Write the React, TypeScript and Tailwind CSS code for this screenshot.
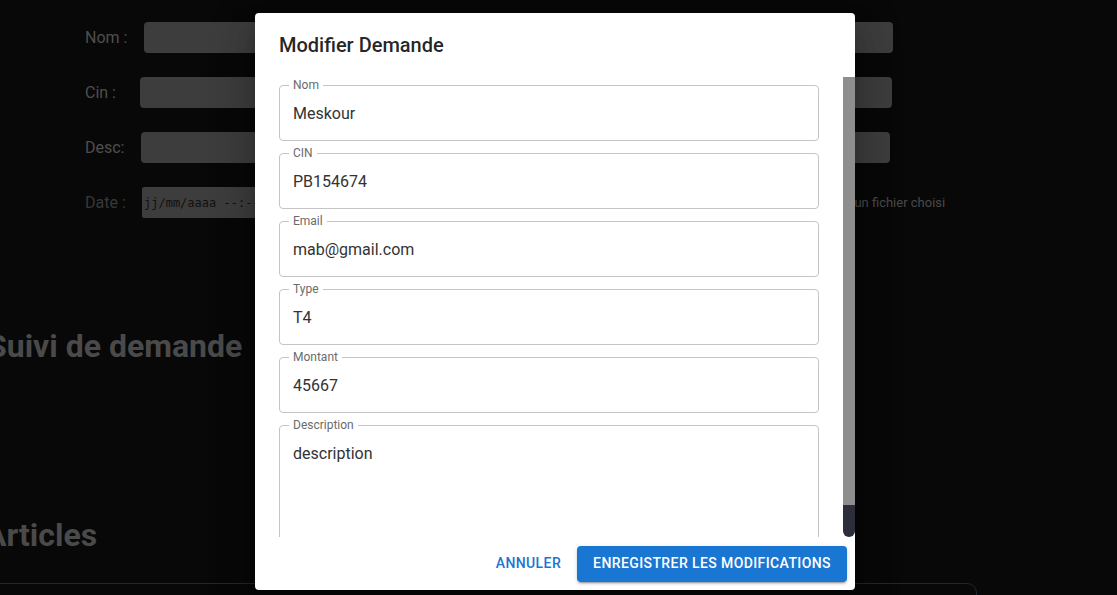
import React from "react";

function Field({ label, value, tall }: { label: string; value: string; tall?: boolean }) {
  return (
    <div
      className={
        tall
          ? "relative shrink-0 h-[160px] border border-[#c4c4c4] rounded-[4px] flex items-start pt-[16px] px-[13px] text-[16px] leading-[23px] text-[#333333]"
          : "relative shrink-0 h-[56px] border border-[#c4c4c4] rounded-[4px] flex items-center px-[13px] text-[16px] leading-[23px] text-[#333333]"
      }
    >
      <span className="absolute left-[9px] -top-[9px] px-[4px] bg-white text-[12px] leading-[16px] text-[#6b6b6b]">
        {label}
      </span>
      <span>{value}</span>
    </div>
  );
}

export default function App() {
  return (
    <div className="relative w-[1117px] h-[595px] overflow-hidden bg-[#080808] font-['Roboto','Liberation_Sans',sans-serif]">
      {/* background page */}
      <div className="flex flex-col pt-[22px]">
        <div className="flex flex-col gap-[24px] pl-[85px]">
          <div className="flex items-center h-[31px]">
            <span className="w-[59px] text-[16px] text-[#4f4f4f]">Nom :</span>
            <div className="h-[31px] w-[749px] rounded-[4px] bg-[#3d3d3d]" />
          </div>
          <div className="flex items-center h-[31px]">
            <span className="w-[55px] text-[16px] text-[#4f4f4f]">Cin :</span>
            <div className="h-[31px] w-[752px] rounded-[4px] bg-[#3d3d3d]" />
          </div>
          <div className="flex items-center h-[31px]">
            <span className="w-[56px] text-[16px] text-[#4f4f4f]">Desc:</span>
            <div className="h-[31px] w-[749px] rounded-[4px] bg-[#3d3d3d]" />
          </div>
          <div className="flex items-center h-[31px]">
            <span className="w-[57px] text-[16px] text-[#383838]">Date :</span>
            <div className="h-[31px] w-[200px] rounded-[2px] bg-[#3d3d3d] flex items-center pl-[2px] font-['DejaVu_Sans_Mono',monospace] text-[12px] text-[#111111]">
              jj/mm/aaaa --:--
            </div>
            <span className="ml-[490px] text-[13px] text-[#4a4a4a]">Aucun fichier choisi</span>
          </div>
        </div>
        <h2 className="mt-[110px] ml-[-13px] text-[32px] leading-[37px] font-bold text-[#4a4a4a] whitespace-nowrap">
          Suivi de demande
        </h2>
        <h2 className="mt-[152px] ml-[-15px] text-[32px] leading-[37px] font-bold text-[#4a4a4a] whitespace-nowrap">
          Articles
        </h2>
        <div className="mt-[29px] ml-[-13px] w-[990px] h-[40px] border border-[#1c2833] rounded-[10px]" />
      </div>

      {/* dialog */}
      <div className="absolute left-[255px] top-[13px] w-[600px] h-[577px] bg-white rounded-[4px] shadow-[0_11px_15px_-7px_rgba(0,0,0,0.2),0_24px_38px_3px_rgba(0,0,0,0.14),0_9px_46px_8px_rgba(0,0,0,0.12)] flex flex-col overflow-hidden">
        <div className="px-[24px] py-[16px] text-[20px] leading-[32px] font-medium text-[rgba(0,0,0,0.87)]">
          Modifier Demande
        </div>
        <div className="flex flex-1 min-h-0">
          <div className="flex-1 min-w-0 overflow-hidden px-[24px] pt-[8px] flex flex-col gap-[12px]">
            <Field label="Nom" value="Meskour" />
            <Field label="CIN" value="PB154674" />
            <Field label="Email" value="mab@gmail.com" />
            <Field label="Type" value="T4" />
            <Field label="Montant" value="45667" />
            <Field label="Description" value="description" tall />
          </div>
          <div className="w-[12px] flex flex-col">
            <div className="flex-1 bg-[#8e8e8e]" />
            <div className="h-[32px] bg-[#2c2e3b] rounded-b-[6px]" />
          </div>
        </div>
        <div className="h-[53px] flex items-center justify-end gap-[8px] pr-[8px]">
          <button className="h-[36px] px-[8px] text-[14px] font-medium tracking-[0.4px] uppercase text-[#1976d2]">
            Annuler
          </button>
          <button className="h-[36px] px-[16px] rounded-[4px] bg-[#1976d2] text-white text-[14px] font-medium tracking-[0.4px] uppercase shadow-[0_3px_1px_-2px_rgba(0,0,0,0.2),0_2px_2px_0_rgba(0,0,0,0.14),0_1px_5px_0_rgba(0,0,0,0.12)]">
            Enregistrer les modifications
          </button>
        </div>
      </div>
    </div>
  );
}
